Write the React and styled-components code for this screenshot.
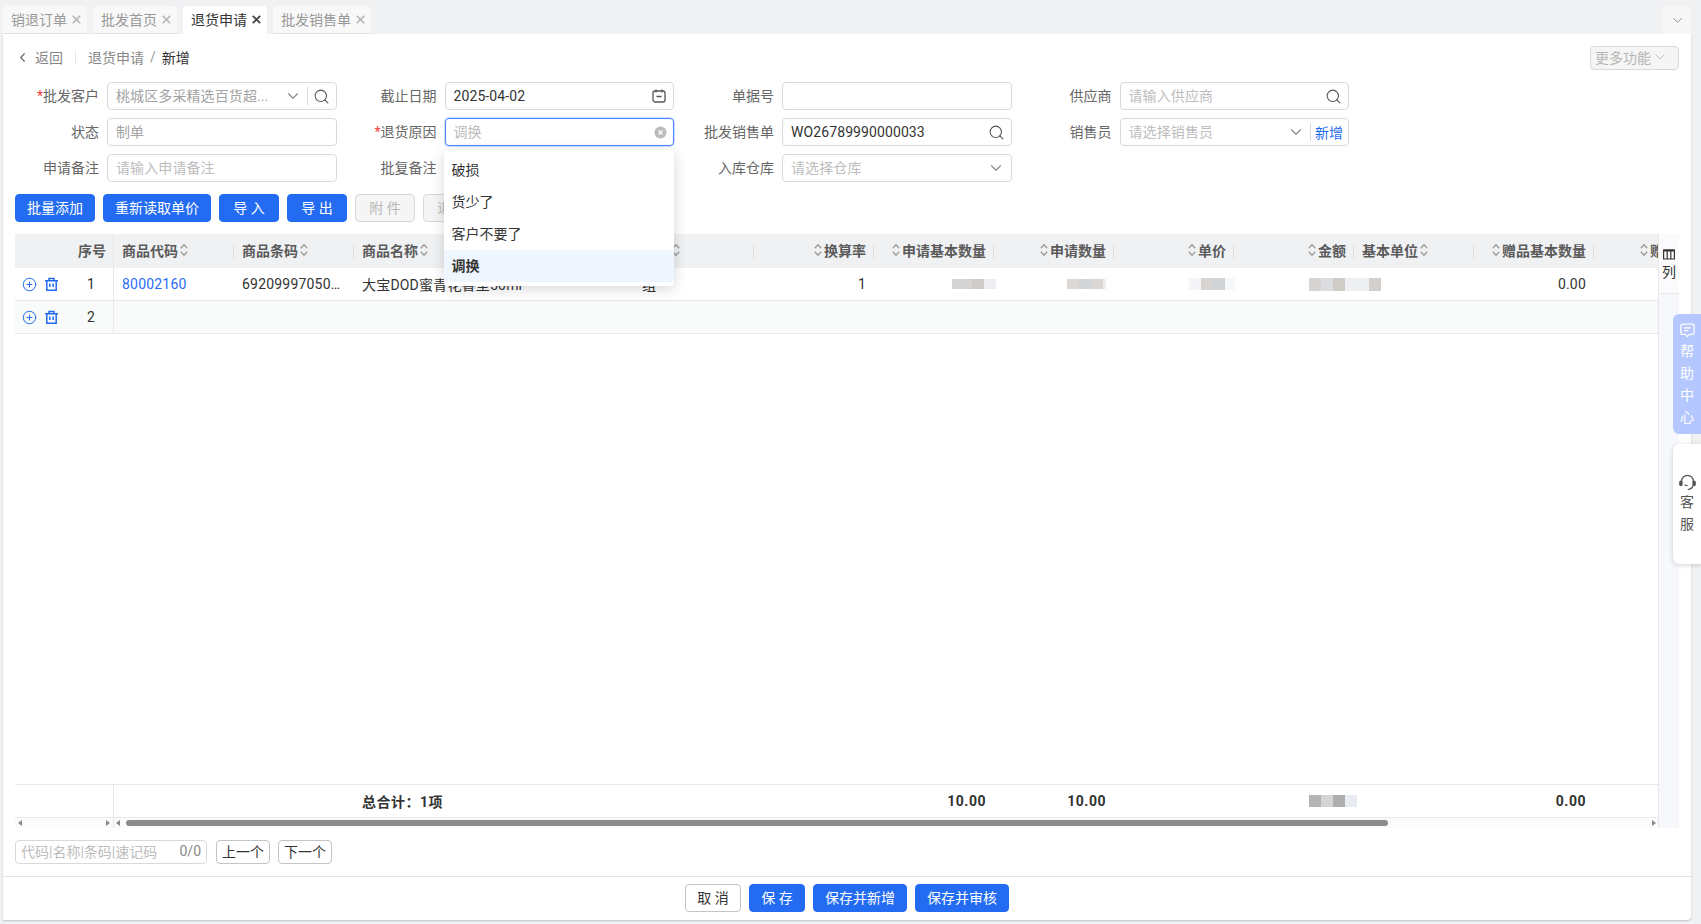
import React from 'react';
import styled, { createGlobalStyle } from 'styled-components';
import { ChevronDown, ChevronLeft, Search, CirclePlus } from 'lucide-react';

const Global = createGlobalStyle`
  html, body { margin: 0; height: 100%; overflow: hidden; }
  body { background: #f0f1f3; font-family: Roboto, "Noto Sans CJK SC", sans-serif; font-size: 14px; color: #333; }
  * { box-sizing: border-box; }
`;

const Page = styled.div`position: relative; width: 1701px; height: 924px; display: flex; flex-direction: column;`;
const TabBar = styled.div`height: 34px; padding: 6px 10px 0 3px; display: flex; justify-content: space-between; flex: none;`;
const Tabs = styled.div`display: flex; gap: 6px;`;
const Tab = styled.div`
  display: flex; align-items: center; gap: 5px; padding: 0 6px 0 8px; line-height: 20px; border-radius: 4px 4px 0 0;
  background: ${p => (p.$active ? '#fff' : '#f8f8f8')}; color: ${p => (p.$active ? '#333' : '#999')};
  border-bottom: 1px solid ${p => (p.$active ? '#fff' : '#e2e2e2')};
`;
const TabMore = styled.div`width: 28px; display: flex; align-items: center; justify-content: center; background: #f7f7f7; border-radius: 4px 4px 0 0; color: #888;`;

const Panel = styled.main`
  margin-left: 3px; width: 1688px; height: 886px; background: #fff; padding: 12px 12px 0; display: flex; flex-direction: column;
  box-shadow: 0 1px 2px rgba(0,0,0,.2); border-radius: 0 0 4px 0;
`;
const Crumbs = styled.div`height: 24px; padding-bottom: 2px; margin-bottom: 12px; display: flex; align-items: center; color: #888; flex: none;`;
const Back = styled.span`display: flex; align-items: center; gap: 5px;`;
const CrumbSep = styled.span`width: 1px; height: 12px; background: #e4e4e4; margin: 0 12px;`;
const CrumbSlash = styled.span`margin: 0 6px; color: #999;`;
const CrumbNow = styled.span`color: #333;`;
const MoreBtn = styled.button`
  margin-left: auto; margin-bottom: -2px; width: 89px; height: 24px; display: flex; align-items: center; gap: 1px; padding: 0 0 3px 4px;
  border: 1px solid #d9d9d9; border-radius: 4px; background: #f5f5f5; color: #b5b5b5; font: inherit;
`;

const Form = styled.section`display: grid; grid-template-columns: repeat(4, 321.5px); column-gap: 16px; row-gap: 8px; flex: none;`;
const Field = styled.div`display: grid; grid-template-columns: 84px 229.5px; column-gap: 8px; align-items: center;`;
const Label = styled.label`text-align: right; color: #666; line-height: 28px; white-space: nowrap;`;
const Star = styled.i`color: #f5413f; font-style: normal;`;
const Control = styled.div`
  position: relative; height: 28px; display: flex; align-items: center; gap: 5px; padding: 0 6px 0 8px; background: #fff; border-radius: 4px;
  border: 1px solid ${p => (p.$focus ? '#4f86ff' : '#d9d9d9')};
  box-shadow: ${p => (p.$focus ? '0 0 0 1px #cfe0ff' : 'none')};
`;
const Value = styled.span`
  flex: 1; min-width: 0; white-space: nowrap; overflow: hidden; text-overflow: ellipsis; line-height: 20px; letter-spacing: .1px;
  color: ${p => (p.$tone === 'ph' ? '#bdbdbd' : p.$tone === 'dim' ? '#a3a3a3' : '#333')};
`;
const Divider = styled.span`width: 1px; height: 18px; background: #dcdcdc;`;
const AddLink = styled.span`color: #1f6bf2; margin-right: -1px; margin-left: -1px;`;
const Dropdown = styled.ul`
  position: absolute; left: -2px; top: 31px; width: 230px; margin: 0; padding: 4px 0; list-style: none; background: #fff; z-index: 20;
  border-radius: 4px; box-shadow: 0 3px 14px rgba(0,0,0,.16);
`;
const Option = styled.li`
  height: 32px; line-height: 32px; padding: 0 8px; color: #333;
  background: ${p => (p.$active ? '#eff6fd' : '#fff')}; font-weight: ${p => (p.$active ? 700 : 400)};
`;

const Toolbar = styled.div`display: flex; gap: 8px; margin-top: 12px; flex: none;`;
const Btn = styled.button`
  height: 28px; width: ${p => p.$w}px; padding: 0 0 2px; border-radius: 4px; font: inherit; flex: none;
  border: 1px solid ${p => (p.$kind === 'primary' ? '#236cf2' : p.$kind === 'off' ? '#d9d9d9' : '#c4c4c4')};
  background: ${p => (p.$kind === 'primary' ? '#236cf2' : p.$kind === 'off' ? '#f5f5f5' : '#fff')};
  color: ${p => (p.$kind === 'primary' ? '#fff' : p.$kind === 'off' ? '#b8b8b8' : '#333')};
`;
const SmallBtn = styled(Btn)`height: 24px;`;

const cols = '99px 120px 120px 280px 120px 120px 120px 120px 120px 120px 120px 120px 120px';
const TableWrap = styled.section`flex: 1; min-height: 0; margin-top: 12px; display: flex;`;
const TableMain = styled.div`width: 1643px; display: flex; flex-direction: column; overflow: hidden;`;
const Grid = styled.div`
  display: grid; grid-template-columns: ${cols}; flex: none; width: 1759px;
  height: ${p => p.$h}px; background: ${p => p.$bg || '#fff'};
  border-top: ${p => (p.$top ? '1px solid #e8e8e8' : '0')};
  border-bottom: ${p => (p.$line ? '1px solid #e8e8e8' : '0')};
`;
const HeadCell = styled.div`
  position: relative; display: flex; align-items: center; gap: 2px; font-weight: 700; color: #5a5a5a;
  justify-content: ${p => (p.$right ? 'flex-end' : 'flex-start')};
  padding: ${p => (p.$right ? '0 8px 2px 0' : '0 0 2px 8px')}; white-space: nowrap;
  &::after { content: ''; position: absolute; right: 0; top: 11px; width: 1px; height: 13px; background: #dcdcdc; }
`;
const SeqHead = styled.div`
  display: flex; align-items: center; justify-content: flex-end; padding: 0 7px 2px 0; font-weight: 700; color: #5a5a5a;
  border-right: 1px solid #e6e6e6;
`;
const ActionCell = styled.div`display: flex; align-items: center; padding-left: 7px; gap: 7px; border-right: 1px solid #e8e8e8; color: #236cf2;`;
const Seq = styled.span`margin-left: 21px; color: #333;`;
const Cell = styled.div`
  display: flex; align-items: center; min-width: 0; letter-spacing: ${p => (p.$bold ? '.5px' : '.2px')};
  padding: 0 8px ${p => (p.$bold ? '2px' : '0')};
  justify-content: ${p => (p.$right ? 'flex-end' : 'flex-start')};
  font-weight: ${p => (p.$bold ? 700 : 400)}; color: ${p => (p.$link ? '#2a6df4' : '#333')};
`;
const Clip = styled.span`white-space: nowrap; overflow: hidden; text-overflow: ellipsis;`;
const Wide = styled.span`white-space: nowrap;`;
const FootLeft = styled.div`border-right: 1px solid #e8e8e8;`;
const Spacer = styled.div`flex: 1;`;
const Mosaic = styled.span`display: inline-flex; height: ${p => p.$h}px; margin-left: ${p => p.$ml || 0}px; margin-right: ${p => p.$mr || 0}px; flex: none;`;
const Tile = styled.span`display: block; height: 100%; width: ${p => p.$w}px; background: ${p => p.$c};`;
const Bars = styled.div`height: 11px; flex: none; display: flex; background: #fbfbfb; border-top: 1px solid #e8e8e8; margin-top: -1px;`;
const BarLeft = styled.div`width: 99px; display: flex; align-items: center; justify-content: space-between; padding: 0 3px; border-right: 1px solid #e8e8e8;`;
const BarRight = styled.div`flex: 1; display: flex; align-items: center; padding: 0 2px;`;
const Thumb = styled.div`width: 1262px; height: 6px; margin-left: 6px; border-radius: 3px; background: #8c8c8c;`;
const Arrow = styled.span`
  width: 0; height: 0; border-top: 3.5px solid transparent; border-bottom: 3.5px solid transparent; flex: none;
  ${p => (p.$dir === 'left' ? 'border-right: 4px solid #888;' : 'border-left: 4px solid #888;')}
  margin-left: ${p => (p.$push ? 'auto' : '0')};
`;
const Strip = styled.aside`width: 21px; flex: none; background: #f7f8fb; border-left: 1px solid #e8e8e8;`;
const StripHead = styled.div`
  height: 60px; padding-top: 15px; display: flex; flex-direction: column; align-items: center; gap: 2px; line-height: 20px;
  border-bottom: 1px solid #e8e8e8; color: #333; background: #fbfbfd;
`;

const SearchRow = styled.div`display: flex; gap: 8px; margin-top: 12px; height: 24px; flex: none; align-items: stretch;`;
const SearchBox = styled.div`
  width: 192px; margin-right: 1px; display: flex; align-items: center; justify-content: space-between; padding: 0 5px 2px; border: 1px solid #d9d9d9; border-radius: 4px;
`;
const SearchPh = styled.span`color: #bdbdbd; white-space: nowrap;`;
const SearchCount = styled.span`color: #888;`;
const FootBar = styled.footer`
  margin: 12px -12px 0; height: 44px; flex: none; border-top: 1px solid #e2e2e2; padding-top: 7px; display: flex; justify-content: center; gap: 8px;
`;
const Float = styled.div`
  position: absolute; right: 0; top: ${p => p.$top}px; width: 28px; height: 120px; border-radius: 6px 0 0 6px; display: flex; flex-direction: column; align-items: center;
  justify-content: center; line-height: 22px; padding-top: ${p => (p.$help ? 2 : 1)}px;
  background: ${p => (p.$help ? '#b4c7ff' : '#fff')}; color: ${p => (p.$help ? '#fff' : '#555')};
  box-shadow: ${p => (p.$help ? 'none' : '0 1px 5px rgba(0,0,0,.18)')};
`;
const FloatIcon = styled.svg`margin-bottom: ${p => (p.$gap || 0)}px; flex: none;`;

const Close = ({ color, w = 1.6 }) => (
  <svg width="9" height="9" viewBox="0 0 9 9" fill="none" stroke={color} strokeWidth={w}><path d="M.8.8l7.4 7.4M8.2.8L.8 8.2" /></svg>
);
const Sort = () => (
  <svg width="8" height="14" viewBox="0 0 8 14" fill="none" stroke="#999" strokeWidth="1.3"><path d="M.8 5.2L4 1.8l3.2 3.4M.8 8.8L4 12.2l3.2-3.4" /></svg>
);
const Calendar = () => (
  <svg width="16" height="16" viewBox="0 0 16 16" fill="none" stroke="#555" strokeWidth="1.3">
    <rect x="2" y="3" width="12" height="11" rx="2" /><path d="M5 1.5v3M11 1.5v3M5.5 8.5h5" />
  </svg>
);
const Clear = () => (
  <svg width="13" height="13" viewBox="0 0 13 13"><circle cx="6.5" cy="6.5" r="6" fill="#bcbcbc" /><path d="M4.5 4.5l4 4M8.5 4.5l-4 4" stroke="#fff" strokeWidth="1.3" /></svg>
);
const Trash = () => (
  <svg width="15" height="15" viewBox="0 0 15 15" fill="none" stroke="currentColor" strokeWidth="1.5">
    <path d="M1 3.8h13M5 3.6V1.5h5v2.1M2.8 3.8v9.4h9.4V3.8M5.8 6.5v3.5M9.2 6.5v3.5" />
  </svg>
);
const ColumnsIcon = () => (
  <svg width="12" height="11" viewBox="0 0 12 11" fill="none" stroke="#333" strokeWidth="1.2">
    <path d="M.6 1h10.8v9H.6zM4.2 1v9M7.8 1v9" /><path d="M.6 1.5h10.8" strokeWidth="2" />
  </svg>
);
const HelpIcon = () => (
  <FloatIcon $gap={2} width="15" height="15" viewBox="0 0 15 15" fill="none" stroke="#fff" strokeWidth="1.3">
    <path d="M2.5 1.2h10a1.6 1.6 0 0 1 1.6 1.6v7a1.6 1.6 0 0 1-1.6 1.6H9.6l-2.1 2.2-2.1-2.2H2.5A1.6 1.6 0 0 1 .9 9.8v-7a1.6 1.6 0 0 1 1.6-1.6z" />
    <path d="M4 4.8h7M4 7.6h4.4" />
  </FloatIcon>
);
const ServiceIcon = () => (
  <FloatIcon width="17" height="17" viewBox="0 0 17 17" fill="none" stroke="#555" strokeWidth="1.2">
    <path d="M2.6 9V7.2a5.9 5.9 0 0 1 11.8 0V9" />
    <rect x=".8" y="7" width="2.2" height="4.6" rx="1" fill="#555" />
    <rect x="14" y="7" width="2.2" height="4.6" rx="1" fill="#555" />
    <path d="M5.5 10.6c.8.8 1.8 1.1 3 1.1M14 11.5c-.6 2.4-2.6 3.9-5.3 4" />
  </FloatIcon>
);

const Dim = () => <ChevronDown size={18} color="#888" strokeWidth={1.5} />;
const Glass = () => <Search size={17} color="#555" strokeWidth={1.5} />;

const F = ({ label, req, children }) => (
  <Field>
    <Label>{req && <Star>*</Star>}{label}</Label>
    {children}
  </Field>
);

const H = ({ t, right }) => (
  <HeadCell $right={right}>
    {right && <Sort />}{t}{!right && <Sort />}
  </HeadCell>
);

const tile = (list) => list.map(([w, c], i) => <Tile key={i} $w={w} $c={c} />);

export default function App() {
  return (
    <Page>
      <Global />
      <TabBar>
        <Tabs>
          <Tab>销退订单<Close color="#b4b4b4" /></Tab>
          <Tab>批发首页<Close color="#b4b4b4" /></Tab>
          <Tab $active>退货申请<Close color="#444" w={1.8} /></Tab>
          <Tab>批发销售单<Close color="#b4b4b4" /></Tab>
        </Tabs>
        <TabMore><ChevronDown size={15} strokeWidth={1.5} /></TabMore>
      </TabBar>
      <Panel>
        <Crumbs>
          <Back><ChevronLeft size={15} strokeWidth={1.8} color="#666" />返回</Back>
          <CrumbSep />
          退货申请<CrumbSlash>/</CrumbSlash><CrumbNow>新增</CrumbNow>
          <MoreBtn>更多功能<ChevronDown size={16} strokeWidth={1.4} color="#bbb" /></MoreBtn>
        </Crumbs>
        <Form>
          <F label="批发客户" req>
            <Control>
              <Value $tone="dim">桃城区多采精选百货超...</Value>
              <Dim /><Divider /><Glass />
            </Control>
          </F>
          <F label="截止日期"><Control><Value>2025-04-02</Value><Calendar /></Control></F>
          <F label="单据号"><Control><Value /></Control></F>
          <F label="供应商"><Control><Value $tone="ph">请输入供应商</Value><Glass /></Control></F>

          <F label="状态"><Control><Value $tone="dim">制单</Value></Control></F>
          <F label="退货原因" req>
            <Control $focus>
              <Value $tone="ph">调换</Value><Clear />
              <Dropdown>
                <Option>破损</Option>
                <Option>货少了</Option>
                <Option>客户不要了</Option>
                <Option $active>调换</Option>
              </Dropdown>
            </Control>
          </F>
          <F label="批发销售单"><Control><Value>WO26789990000033</Value><Glass /></Control></F>
          <F label="销售员">
            <Control>
              <Value $tone="ph">请选择销售员</Value>
              <Dim /><Divider /><AddLink>新增</AddLink>
            </Control>
          </F>

          <F label="申请备注"><Control><Value $tone="ph">请输入申请备注</Value></Control></F>
          <F label="批复备注"><Control><Value /></Control></F>
          <F label="入库仓库"><Control><Value $tone="ph">请选择仓库</Value><Dim /></Control></F>
        </Form>
        <Toolbar>
          <Btn $kind="primary" $w={80}>批量添加</Btn>
          <Btn $kind="primary" $w={108}>重新读取单价</Btn>
          <Btn $kind="primary" $w={60}>导 入</Btn>
          <Btn $kind="primary" $w={60}>导 出</Btn>
          <Btn $kind="off" $w={60}>附 件</Btn>
          <Btn $kind="off" $w={60}>退 回</Btn>
        </Toolbar>
        <TableWrap>
          <TableMain>
            <Grid $h={34} $bg="#f0f1f3">
              <SeqHead>序号</SeqHead>
              <H t="商品代码" /><H t="商品条码" /><H t="商品名称" /><H t="单位" />
              <H right t="换算率" /><H right t="申请基本数量" /><H right t="申请数量" /><H right t="单价" /><H right t="金额" />
              <H t="基本单位" /><H right t="赠品基本数量" /><H right t="赠品数量" />
            </Grid>
            <Grid $h={33} $line>
              <ActionCell>
                <CirclePlus size={15} strokeWidth={1.6} /><Trash /><Seq>1</Seq>
              </ActionCell>
              <Cell $link>80002160</Cell>
              <Cell><Clip>6920999705012</Clip></Cell>
              <Cell><Wide>大宝DOD蜜青花香型50ml</Wide></Cell>
              <Cell>组</Cell>
              <Cell $right>1</Cell>
              <Cell $right><Mosaic $h={10} $mr={-10}>{tile([[20, '#d4d4d4'], [12, '#cfcbc9'], [12, '#eeeef2']])}</Mosaic></Cell>
              <Cell $right><Mosaic $h={10}>{tile([[12, '#dcd8d6'], [12, '#d2d4d8'], [12, '#dad6d3'], [3, '#eeeef2']])}</Mosaic></Cell>
              <Cell $right><Mosaic $h={12} $mr={-9}>{tile([[12, '#f5f5f7'], [12, '#d8d4d2'], [12, '#d0d2d4'], [10, '#f7f8fa']])}</Mosaic></Cell>
              <Cell><Mosaic $h={13} $ml={67}>{tile([[12, '#d8d4d2'], [12, '#dcdde3'], [12, '#cfccc8'], [12, '#eeeff3'], [12, '#eeeff3'], [12, '#d2cfcd']])}</Mosaic></Cell>
              <Cell />
              <Cell $right>0.00</Cell>
              <Cell />
            </Grid>
            <Grid $h={33} $line $bg="#f9fafa">
              <ActionCell>
                <CirclePlus size={15} strokeWidth={1.6} /><Trash /><Seq>2</Seq>
              </ActionCell>
            </Grid>
            <Spacer />
            <Grid $h={34} $top>
              <FootLeft />
              <Cell /><Cell />
              <Cell $bold><Wide>总合计：1项</Wide></Cell>
              <Cell /><Cell />
              <Cell $right $bold>10.00</Cell>
              <Cell $right $bold>10.00</Cell>
              <Cell />
              <Cell $bold><Mosaic $h={12} $ml={67}>{tile([[12, '#b5b5b5'], [12, '#d4d4d4'], [12, '#b0aead'], [12, '#e8ecf2']])}</Mosaic></Cell>
              <Cell />
              <Cell $right $bold>0.00</Cell>
              <Cell />
            </Grid>
            <Bars>
              <BarLeft><Arrow $dir="left" /><Arrow $dir="right" /></BarLeft>
              <BarRight><Arrow $dir="left" /><Thumb /><Arrow $dir="right" $push /></BarRight>
            </Bars>
          </TableMain>
          <Strip>
            <StripHead><ColumnsIcon />列</StripHead>
          </Strip>
        </TableWrap>
        <SearchRow>
          <SearchBox><SearchPh>代码|名称|条码|速记码</SearchPh><SearchCount>0/0</SearchCount></SearchBox>
          <SmallBtn $w={54}>上一个</SmallBtn>
          <SmallBtn $w={54}>下一个</SmallBtn>
        </SearchRow>
        <FootBar>
          <Btn $w={56}>取 消</Btn>
          <Btn $kind="primary" $w={56}>保 存</Btn>
          <Btn $kind="primary" $w={94}>保存并新增</Btn>
          <Btn $kind="primary" $w={94}>保存并审核</Btn>
        </FootBar>
      </Panel>
      <Float $help $top={314}>
        <HelpIcon />帮<br />助<br />中<br />心
      </Float>
      <Float $top={444}>
        <ServiceIcon />客<br />服
      </Float>
    </Page>
  );
}
